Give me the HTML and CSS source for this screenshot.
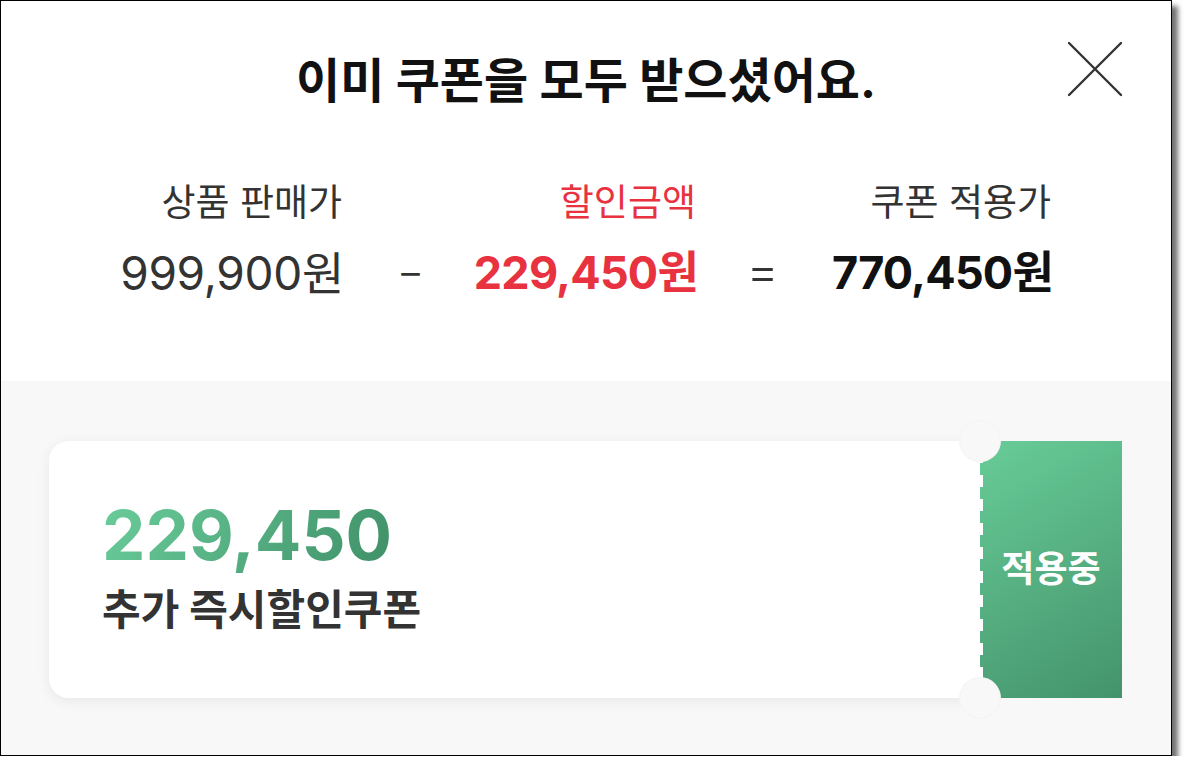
FILE: index.html
```html
<!DOCTYPE html>
<html lang="ko">
<head>
  <meta charset="UTF-8">
  <title>쿠폰 받기</title>
  <link rel="stylesheet" href="styles.css">
</head>
<body>

  <div class="modal">
    <div class="top">
      <h1 class="title">이미 쿠폰을 모두 받으셨어요.</h1>
      <button class="close" aria-label="닫기">
        <svg width="56" height="56" viewBox="0 0 56 56">
          <path d="M2 2 L54 54 M54 2 L2 54" stroke="#333" stroke-width="2.4" stroke-linecap="round" fill="none"/>
        </svg>
      </button>

      <div class="prices">
        <div class="label">상품 판매가</div>
        <div></div>
        <div class="label red">할인금액</div>
        <div></div>
        <div class="label">쿠폰 적용가</div>

        <div class="value">999,900원</div>
        <div class="op">−</div>
        <div class="value red bold">229,450원</div>
        <div class="op eq">=</div>
        <div class="value dark bold">770,450원</div>
      </div>
    </div>

    <div class="bottom">
      <div class="coupon">
        <div class="coupon-body">
          <div class="amount">229,450</div>
          <div class="name">추가 즉시할인쿠폰</div>
        </div>
        <div class="coupon-side">적용중</div>
      </div>
    </div>
  </div>

</body>
</html>
```

FILE: styles.css
```css
body { margin: 0; background: #fff; font-family: Inter, "Noto Sans CJK KR", sans-serif; }
.modal { width: 1172px; height: 756px; box-sizing: border-box; border: 1px solid #000; background: #f8f8f8; box-shadow: 6px 6px 5px rgba(0,0,0,0.55); overflow: hidden; }
.top { position: relative; height: 380px; background: #fff; }
.title { margin: 0; padding-top: 48px; text-align: center; font-size: 48px; font-weight: 700; color: #111; line-height: 64px; }
.close { position: absolute; top: 40px; right: 48px; padding: 0; border: none; background: none; cursor: pointer; }
.close svg { display: block; }

.prices { display: grid; grid-template-columns: 241px 139px 215px 135px 220px; margin: 66px 0 0 99px; color: #333; }
.label, .value { justify-self: end; white-space: nowrap; }
.label { font-size: 37px; line-height: 48px; margin-right: -1px; }
.value { font-size: 46px; line-height: 64px; margin: 14px -3px 0 0; letter-spacing: -0.3px; }
.value.bold { font-size: 45px; letter-spacing: -0.8px; }
.op { text-align: center; font-size: 42px; font-weight: 300; line-height: 64px; margin-top: 12px; color: #333; }
.op.eq { font-size: 50px; }
.red { color: #e8323f; }
.dark { color: #111; }
.bold { font-weight: 700; }

.bottom { padding: 60px 49px 0 48px; }
.coupon { position: relative; display: flex; height: 257px; }
.coupon-body { flex: 1; background: #fff; border-radius: 20px 0 0 20px; box-shadow: 0 3px 14px rgba(0,0,0,0.07); padding: 56px 0 0 53px; }
.amount { font-size: 69px; font-weight: 700; line-height: 76px; background: linear-gradient(120deg, #6acd9b, #3f8f67); -webkit-background-clip: text; background-clip: text; color: transparent; display: inline-block; }
.name { margin-top: 9px; font-size: 42px; font-weight: 700; color: #333; line-height: 56px; }
.coupon-side { width: 142px; display: flex; align-items: center; justify-content: center; padding-bottom: 8px; box-sizing: border-box; color: #fff; font-size: 36px; font-weight: 700;
  background: repeating-linear-gradient(to bottom, #fff 0 12px, transparent 12px 24px) 0 10px / 3px 100% no-repeat, linear-gradient(150deg, #68cc98, #44936b); }
.coupon::before, .coupon::after { content: ""; position: absolute; left: 910px; width: 42px; height: 42px; border-radius: 50%; background: #f8f8f8; box-shadow: inset 0 0 3px rgba(0,0,0,0.04); }
.coupon::before { top: -21px; }
.coupon::after { bottom: -21px; }
```
